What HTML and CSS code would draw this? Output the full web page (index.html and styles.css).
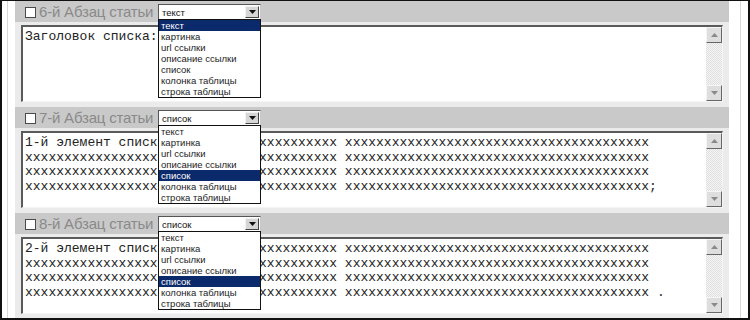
FILE: index.html
```html
<!DOCTYPE html>
<html lang="ru">

<head>
  <meta charset="UTF-8">
  <title>Абзацы статьи</title>
  <link rel="stylesheet" href="styles.css">
</head>

<body>
  <div class="frame">
    <div class="panel">

      <div class="block">
        <div class="block-head">
          <span class="check"></span>
          <span class="title">6-й Абзац статьи</span>
          <div class="select">
            <span class="select-value">текст</span>
            <span class="select-btn"><svg width="7" height="4" viewBox="0 0 7 4"><path d="M0 0h7L3.5 4z" /></svg></span>
            <ul class="options">
              <li class="active">текст</li>
              <li>картинка</li>
              <li>url ссылки</li>
              <li>описание ссылки</li>
              <li>список</li>
              <li>колонка таблицы</li>
              <li>строка таблицы</li>
            </ul>
          </div>
        </div>
        <div class="block-body">
          <div class="area">
            <div class="area-text">Заголовок списка:</div>
            <div class="scroll">
              <span class="scroll-btn"><svg width="7" height="4" viewBox="0 0 7 4"><path d="M0 4h7L3.5 0z" /></svg></span>
              <span class="scroll-track"></span>
              <span class="scroll-btn"><svg width="7" height="4" viewBox="0 0 7 4"><path d="M0 0h7L3.5 4z" /></svg></span>
            </div>
          </div>
        </div>
      </div>

      <div class="block">
        <div class="block-head">
          <span class="check"></span>
          <span class="title">7-й Абзац статьи</span>
          <div class="select">
            <span class="select-value">список</span>
            <span class="select-btn"><svg width="7" height="4" viewBox="0 0 7 4"><path d="M0 0h7L3.5 4z" /></svg></span>
            <ul class="options">
              <li>текст</li>
              <li>картинка</li>
              <li>url ссылки</li>
              <li>описание ссылки</li>
              <li class="active">список</li>
              <li>колонка таблицы</li>
              <li>строка таблицы</li>
            </ul>
          </div>
        </div>
        <div class="block-body">
          <div class="area">
            <div class="area-text">1-й элемент списка xxxxxxxxxxxxxxxxxxxxx xxxxxxxxxxxxxxxxxxxxxxxxxxxxxxxxxxxxxxx
xxxxxxxxxxxxxxxxxxxxxxxxxxxxxxxxxxxxxxxx xxxxxxxxxxxxxxxxxxxxxxxxxxxxxxxxxxxxxxx
xxxxxxxxxxxxxxxxxxxxxxxxxxxxxxxxxxxxxxxx xxxxxxxxxxxxxxxxxxxxxxxxxxxxxxxxxxxxxxx
xxxxxxxxxxxxxxxxxxxxxxxxxxxxxxxxxxxxxxxx xxxxxxxxxxxxxxxxxxxxxxxxxxxxxxxxxxxxxxx;</div>
            <div class="scroll">
              <span class="scroll-btn"><svg width="7" height="4" viewBox="0 0 7 4"><path d="M0 4h7L3.5 0z" /></svg></span>
              <span class="scroll-track"></span>
              <span class="scroll-btn"><svg width="7" height="4" viewBox="0 0 7 4"><path d="M0 0h7L3.5 4z" /></svg></span>
            </div>
          </div>
        </div>
      </div>

      <div class="block">
        <div class="block-head">
          <span class="check"></span>
          <span class="title">8-й Абзац статьи</span>
          <div class="select">
            <span class="select-value">список</span>
            <span class="select-btn"><svg width="7" height="4" viewBox="0 0 7 4"><path d="M0 0h7L3.5 4z" /></svg></span>
            <ul class="options">
              <li>текст</li>
              <li>картинка</li>
              <li>url ссылки</li>
              <li>описание ссылки</li>
              <li class="active">список</li>
              <li>колонка таблицы</li>
              <li>строка таблицы</li>
            </ul>
          </div>
        </div>
        <div class="block-body">
          <div class="area">
            <div class="area-text">2-й элемент списка xxxxxxxxxxxxxxxxxxxxx xxxxxxxxxxxxxxxxxxxxxxxxxxxxxxxxxxxxxxx
xxxxxxxxxxxxxxxxxxxxxxxxxxxxxxxxxxxxxxxx xxxxxxxxxxxxxxxxxxxxxxxxxxxxxxxxxxxxxxx
xxxxxxxxxxxxxxxxxxxxxxxxxxxxxxxxxxxxxxxx xxxxxxxxxxxxxxxxxxxxxxxxxxxxxxxxxxxxxxx
xxxxxxxxxxxxxxxxxxxxxxxxxxxxxxxxxxxxxxxx xxxxxxxxxxxxxxxxxxxxxxxxxxxxxxxxxxxxxxx .</div>
            <div class="scroll">
              <span class="scroll-btn"><svg width="7" height="4" viewBox="0 0 7 4"><path d="M0 4h7L3.5 0z" /></svg></span>
              <span class="scroll-track"></span>
              <span class="scroll-btn"><svg width="7" height="4" viewBox="0 0 7 4"><path d="M0 0h7L3.5 4z" /></svg></span>
            </div>
          </div>
        </div>
      </div>

    </div>
  </div>
</body>

</html>
```

FILE: styles.css
```css
body {
  margin: 0;
  background: #fff;
}

.frame {
  width: 750px;
  height: 320px;
  box-sizing: border-box;
  border: 2px solid #111;
  border-top: 1px solid #111;
  overflow: hidden;
}

.panel {
  height: 100%;
  margin: 0 7px 0 5px;
  border-left: 1px solid #d8d8d8;
  border-right: 1px solid #d8d8d8;
}

.block {
  margin: 0 11px 0 7px;
  background: #ebebeb;
}

.block-head {
  height: 21px;
  display: flex;
  align-items: flex-start;
  padding-left: 10px;
  background: #c9c9c9;
}

.check {
  width: 11px;
  height: 11px;
  box-sizing: border-box;
  margin-top: 6px;
  border: 1px solid #4a4a4a;
  background: #fff;
}

.title {
  width: 117px;
  margin-left: 3px;
  font-family: "Liberation Sans", Arial, sans-serif;
  font-size: 15px;
  letter-spacing: -0.2px;
  line-height: 21px;
  white-space: nowrap;
  color: #8a8a8a;
}

.select {
  position: relative;
  width: 103px;
  height: 16px;
  box-sizing: border-box;
  margin: 3px 0 0 2px;
  display: flex;
  align-items: center;
  border: 1px solid;
  border-color: #555 #c8c8c8 #c8c8c8 #555;
  background: #fff;
}

.select-value {
  flex: 1;
  padding-left: 3px;
  font-family: "Liberation Sans", Arial, sans-serif;
  font-size: 9.5px;
  color: #111;
}

.select-btn {
  width: 14px;
  height: 12px;
  box-sizing: border-box;
  margin-right: 1px;
  display: flex;
  align-items: center;
  justify-content: center;
  border: 1px solid;
  border-color: #f2f2f2 #444 #444 #f2f2f2;
  background: #d6d6d6;
}

.select-btn path {
  fill: #111;
}

.options {
  position: absolute;
  top: 100%;
  left: -1px;
  z-index: 2;
  width: 103px;
  box-sizing: border-box;
  margin: 0;
  padding: 0;
  list-style: none;
  border: 1px solid #111;
  background: #fff;
}

.options li {
  height: 11px;
  padding-left: 2px;
  font-family: "Liberation Sans", Arial, sans-serif;
  font-size: 9.5px;
  line-height: 11px;
  color: #222;
}

.options .active {
  background: #0b2a6b;
  color: #fff;
}

.block-body {
  padding: 3px 6px 5px 6px;
}

.area {
  height: 77px;
  box-sizing: border-box;
  display: flex;
  border-top: 2px solid #5a5a5a;
  border-left: 2px solid #5a5a5a;
  border-right: 1px solid #f4f4f4;
  border-bottom: 1px solid #f4f4f4;
  background: #fff;
}

.area-text {
  flex: 1;
  padding: 3px 2px 0;
  overflow: hidden;
  font-family: "Liberation Mono", "Courier New", monospace;
  font-size: 13px;
  line-height: 14.5px;
  white-space: pre;
  color: #222;
}

.scroll {
  width: 16px;
  display: flex;
  flex-direction: column;
  background-color: #f4f4f4;
  background-image: conic-gradient(#e0e0e0 25%, transparent 0 50%, #e0e0e0 0 75%, transparent 0);
  background-size: 2px 2px;
}

.scroll-btn {
  height: 16px;
  box-sizing: border-box;
  display: flex;
  align-items: center;
  justify-content: center;
  border: 1px solid;
  border-color: #f6f6f6 #666 #666 #f6f6f6;
  background: #dedede;
}

.scroll-btn path {
  fill: #8a8a8a;
}

.scroll-track {
  flex: 1;
}
```
